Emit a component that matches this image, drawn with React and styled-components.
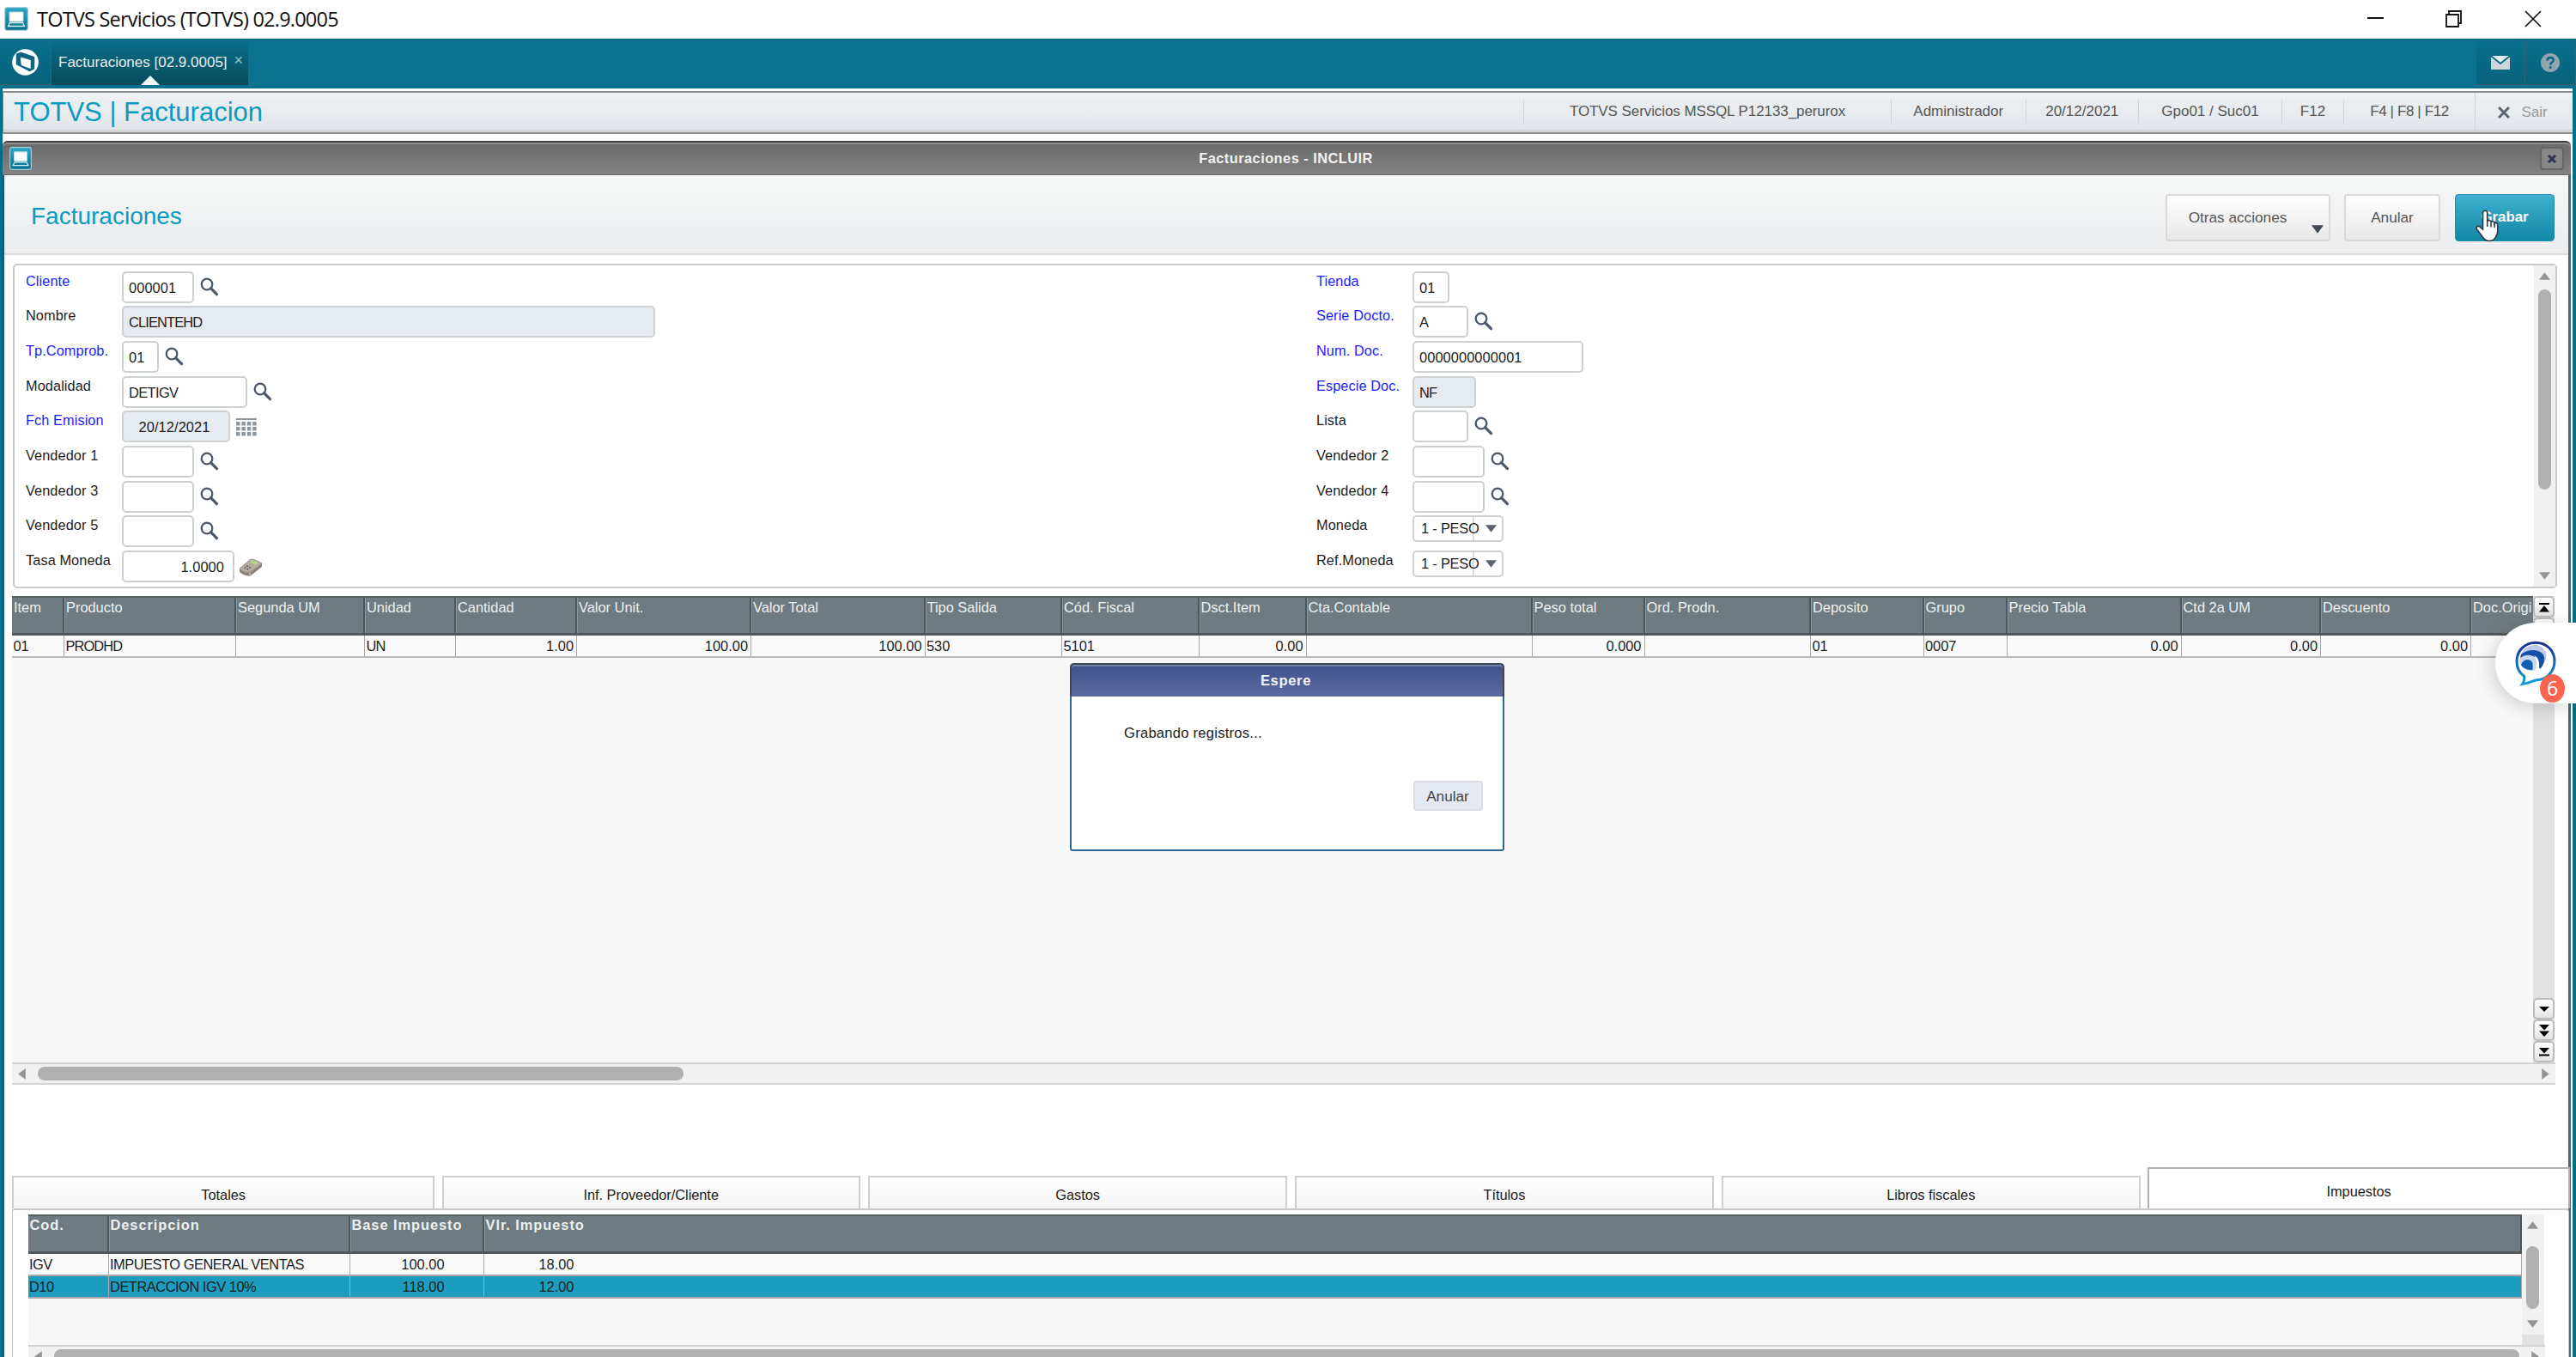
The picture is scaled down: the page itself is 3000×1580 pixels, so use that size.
import React from 'react';
import styled, { createGlobalStyle, css } from 'styled-components';

const GlobalStyle = createGlobalStyle`
  * {
    box-sizing: border-box;
  }
  body {
    margin: 0;
    background: #fff;
    color: #1c1c1c;
    font-family: 'Liberation Sans', Arial, sans-serif;
    font-size: 16.4px;
  }
  svg {
    display: block;
    flex: none;
  }
`;

const Screen = styled.div`
  position: relative;
  display: flex;
  flex-direction: column;
  width: 3000px;
  height: 1580px;
  overflow: hidden;
`;

/* ---------- title bar ---------- */

const TitleBar = styled.header`
  display: flex;
  align-items: center;
  height: 45px;
  padding: 0 40px 1px 5px;
  flex: none;
`;

const TitleText = styled.span`
  flex: 1;
  margin-left: 10px;
  font-family: 'Open Sans', sans-serif;
  font-size: 23.5px;
  letter-spacing: -0.78px;
  color: #111;
`;

const WindowControls = styled.div`
  display: flex;
  gap: 72px;
`;

/* ---------- teal bar ---------- */

const AppBar = styled.nav`
  display: flex;
  height: 58px;
  flex: none;
  padding-bottom: 3px;
  background: #0a728f;
  border-top: 2px solid #006a86;
  border-bottom: 1px solid #006a86;
`;

const BarTile = styled.div`
  display: flex;
  align-items: center;
  justify-content: center;
  width: ${p => p.$w}px;
  background: linear-gradient(#0a708c, #06627b);
  border-right: 1px solid #2f6474;
  border-bottom: 1px solid #38606c;
`;

const AppTab = styled.div`
  display: flex;
  position: relative;
  width: 229px;
  padding: 16px 0 0 8px;
  font-size: 17px;
  color: #e9eef0;
  background: linear-gradient(#0a6f8a, #064b5b);
  i {
    margin-left: 8px;
    margin-top: -3px;
    font-style: normal;
    font-size: 18px;
    color: #a9c2ca;
  }
  &::after {
    content: '';
    position: absolute;
    left: 104px;
    bottom: 0;
    border: 11px solid transparent;
    border-top: 0;
    border-bottom-color: #f2f4f5;
  }
`;

const BarSpacer = styled.div`
  flex: 1;
`;

const Workspace = styled.div`
  display: flex;
  flex-direction: column;
  flex: 1;
  padding-top: 3px;
  border-left: 3px solid #006f8a;
  border-right: 4px solid #006f8a;
`;

/* ---------- session bar ---------- */

const SessionBar = styled.div`
  display: flex;
  align-items: stretch;
  height: 50px;
  flex: none;
  padding-left: 12px;
  color: #565656;
  background: linear-gradient(#eff2f4, #e0e4e9);
  border: 2px solid #8f8f8f;
  border-width: 2px 0 2px 1px;
  box-shadow: inset 0 -3px 0 #d3d6da;
`;

const ModuleName = styled.div`
  flex: 1;
  font-size: 31px;
  line-height: 45px;
  color: #0a9bc0;
`;

const SessionItem = styled.div`
  display: flex;
  align-items: center;
  justify-content: center;
  width: ${p => p.$w}px;
  height: ${p => (p.$tall ? 46 : 29)}px;
  margin-top: ${p => (p.$tall ? 0 : 8)}px;
  padding: 0 ${p => (p.$tall ? 3 : 0)}px 1px 0;
  letter-spacing: ${p => p.$ls || 0}px;
  font-size: 17px;
  border-left: 1.5px solid #d2d6db;
  color: ${p => (p.$tall ? '#999' : 'inherit')};
  gap: 13px;
`;

/* ---------- inner window ---------- */

const InnerWindow = styled.section`
  display: flex;
  flex-direction: column;
  flex: 1;
  margin: 8px 2px 0 0;
  border-left: 2px solid #1d5672;
  border-right: 3px solid #3d6a90;
  border-radius: 7px 7px 0 0;
`;

const WindowTitle = styled.div`
  display: flex;
  align-items: center;
  height: 40px;
  flex: none;
  margin: 0 -3px 0 -2px;
  padding: 0 8px;
  font-weight: bold;
  color: #f2f2f2;
  background: linear-gradient(#6a6a6a, #838383);
  border-top: 2px solid #404040;
  border-bottom: 1px solid #6a6a6a;
  box-shadow: inset 0 2px 0 #909090;
  border-radius: 6px 6px 0 0;
  span {
    flex: 1;
    text-align: center;
    letter-spacing: 0.45px;
  }
`;

const CloseButton = styled.div`
  display: flex;
  align-items: center;
  justify-content: center;
  width: 28px;
  height: 27px;
  background: #878787;
  border: 2px solid #646464;
  border-radius: 4px;
`;

const Toolbar = styled.div`
  display: flex;
  align-items: center;
  height: 93px;
  flex: none;
  padding: 7px 16px 0 31px;
  gap: 16px;
  background: linear-gradient(#f6f8f8, #ebecee);
  border-bottom: 2px solid #dcdcdc;
  h1 {
    flex: 1;
    margin: 0 0 2px;
    font-size: 28px;
    font-weight: normal;
    color: #0a9bc0;
  }
`;

const Button = styled.button`
  position: relative;
  width: ${p => p.$w}px;
  height: 55px;
  padding: 0 ${p => (p.$menu ? 24 : 0)}px 0 0;
  font: 17.2px 'Liberation Sans', Arial, sans-serif;
  color: #555;
  background: linear-gradient(#fff, #e8e8e8);
  border: 2px solid #d9d9d9;
  border-radius: 4px;
  svg {
    position: absolute;
    right: 6px;
    bottom: 5px;
  }
  ${p =>
    p.$primary &&
    css`
      margin-left: 1px;
      font-weight: bold;
      font-size: 16.8px;
      color: #fff;
      background: linear-gradient(#3fb0ce, #1287a6);
      border: 1px solid #1a8fae;
      svg {
        right: 63px;
        bottom: -2px;
      }
    `}
`;

/* ---------- form ---------- */

const FormPanel = styled.div`
  display: flex;
  height: 378px;
  flex: none;
  margin: 10px 13px 9px 10px;
  border: 2px solid #c9c9c9;
  border-radius: 5px;
`;

const FormColumn = styled.div`
  width: ${p => p.$w}px;
  padding: 6.7px 0 0 13px;
`;

const Field = styled.div`
  display: flex;
  align-items: flex-start;
  height: 40.67px;
`;

const Label = styled.label`
  width: 112px;
  line-height: 22px;
  font-size: 16.3px;
  letter-spacing: 0.1px;
  white-space: nowrap;
  color: ${p => (p.$required ? '#1c1cff' : '#1c1c1c')};
`;

const Input = styled.div`
  width: ${p => p.$w}px;
  height: 37px;
  padding: 0 10px 0 6px;
  line-height: 34px;
  letter-spacing: ${p => p.$ls || 0.08}px;
  text-align: ${p => p.$align || 'left'};
  background: ${p => (p.$disabled ? '#e6eaf1' : '#fff')};
  border: 2px solid #cdd1d1;
  border-radius: 5px;
`;

const Select = styled.div`
  display: flex;
  position: relative;
  align-items: center;
  width: 106px;
  height: 31px;
  padding: 0 6px 0 8px;
  letter-spacing: -0.2px;
  border: 2px solid #cdd1d1;
  border-radius: 5px;
  background: linear-gradient(#cdd1d1, #cdd1d1) 67.5px 0 / 1.5px 100% no-repeat;
  svg {
    margin-left: auto;
  }
`;

const IconSlot = styled.div`
  margin: ${p => p.$top || 7}px 0 0 ${p => p.$left || 7}px;
`;

/* ---------- scrollbars ---------- */

const VScroll = styled.div`
  display: flex;
  flex-direction: column;
  align-items: center;
  width: 25px;
  margin-left: auto;
  padding: 6px 0;
  background: #f1f1f1;
  svg:last-child {
    margin-top: auto;
  }
`;

const VThumb = styled.div`
  width: 15.5px;
  height: ${p => p.$h}px;
  margin-top: ${p => p.$top}px;
  background: #b0b0b0;
  border-radius: 8px;
`;

const HScroll = styled.div`
  display: flex;
  align-items: center;
  height: 26px;
  flex: none;
  padding: 0 5px;
  background: #f1f1f1;
  border-top: 2px solid #ced3d3;
  border-bottom: 2px solid #ced3d3;
  svg:last-child {
    margin-left: auto;
  }
`;

const HThumb = styled.div`
  width: ${p => p.$w}px;
  height: 16px;
  margin-left: 12px;
  background: #b0b0b0;
  border-radius: 8px;
`;

const StepButton = styled.div`
  display: flex;
  align-items: center;
  justify-content: center;
  height: 25px;
  background: linear-gradient(#fff, #e4e4e4);
  border: 2px solid #bcbcbc;
  border-radius: 5px;
`;

/* ---------- items grid ---------- */

const GridArea = styled.div`
  display: flex;
  flex: none;
  height: 543px;
  margin-left: 9px;
`;

const GridBody = styled.div`
  width: ${p => p.$w}px;
  overflow: hidden;
  background: #f8f8f8;
`;

const HeadRow = styled.div`
  display: flex;
  height: 46px;
  color: #eef0f0;
  background: #6e7c81;
  border-top: 2px solid #555f62;
  border-bottom: 3px solid #54585b;
`;

const HeadCell = styled.div`
  flex: none;
  width: ${p => p.$w}px;
  padding: ${p => (p.$bold ? 1 : 2)}px 0 0 2px;
  font-weight: ${p => (p.$bold ? 'bold' : 'normal')};
  letter-spacing: ${p => (p.$bold ? 0.95 : 0)}px;
  white-space: nowrap;
  border-right: 2px solid #4e575b;
  box-shadow: 1px 0 0 #8e999c;
`;

const BodyRow = styled.div`
  display: flex;
  height: 26px;
  background: ${p => (p.$selected ? '#1c9dbf' : '#fafafa')};
  border-bottom: 2px solid ${p => (p.$plain ? '#b7b7b7' : '#b0a3a3')};
`;

const Cell = styled.div`
  flex: none;
  width: ${p => p.$w}px;
  padding: 0 ${p => p.$pr || 3}px 0 1.5px;
  line-height: 24px;
  white-space: nowrap;
  text-align: ${p => (p.$right ? 'right' : 'left')};
  letter-spacing: ${p => p.$ls || 0}px;
  border-right: 1.5px solid #aaa;
`;

const StepScroll = styled.div`
  display: flex;
  flex-direction: column;
  width: 25px;
  background: #e1e1e1;
`;

const GridHScroll = styled(HScroll)`
  width: 2962px;
  margin-left: 9px;
`;

const TaxHScroll = styled(HScroll)`
  width: 2931px;
`;

/* ---------- tabs ---------- */

const TabStrip = styled.div`
  display: flex;
  align-items: flex-end;
  height: 48px;
  flex: none;
  margin: 96px -2px 0 9px;
  gap: 4px;
`;

const Tab = styled.div`
  width: ${p => p.$w}px;
  height: ${p => (p.$active ? 48 : 38)}px;
  margin-left: ${p => p.$ml || 0}px;
  padding-top: ${p => (p.$active ? 16 : 10)}px;
  line-height: 20px;
  text-align: center;
  letter-spacing: -0.05px;
  background: ${p => (p.$active ? '#fff' : 'linear-gradient(#fff, #f5f5f5)')};
  border: 2px solid ${p => (p.$active ? '#b2b2b2' : '#cfcfcf')};
  border-bottom: 0;
`;

const TabPanel = styled.div`
  flex: 1;
  margin-left: 9px;
  margin-right: -1px;
  padding: 5px 27px 0 17.5px;
  border: 1.5px solid #c4c4c4;
  border-top: 2px solid #c9c9c9;
  border-radius: 4px 4px 0 0;
`;

const TaxArea = styled.div`
  display: flex;
  height: 152px;
`;

const TaxScroll = styled.div`
  width: 26px;
  height: 152px;
  background: #e1e1e1;
  > div {
    width: 26px;
    height: 140px;
  }
`;

/* ---------- wait dialog ---------- */

const Dialog = styled.div`
  position: absolute;
  left: 1245.5px;
  top: 772px;
  width: 506px;
  height: 219px;
  background: #fff;
  border: 2px solid #2b6994;
  border-top: 0;
  border-radius: 5px 5px 3px 3px;
  h2 {
    height: 39px;
    margin: 0 -2px;
    padding-right: 2px;
    font-size: 16.5px;
    line-height: 37px;
    letter-spacing: 0.7px;
    text-align: center;
    color: #f4f4f4;
    background: linear-gradient(#3d518a, #5d6ca1);
    border: 2px solid #414752;
    border-bottom: 0;
    border-radius: 5px 5px 0 0;
    box-shadow: inset 0 2px 0 #7480ab;
  }
  p {
    margin: 33px 0 0 61.5px;
    line-height: 20px;
    font-size: 16.6px;
    letter-spacing: 0.24px;
  }
`;

const DialogButton = styled.div`
  width: 81px;
  height: 35px;
  margin: 45px 0 0 398px;
  line-height: 33px;
  text-align: center;
  font-size: 17.2px;
  color: #444;
  background: #e5e9f1;
  border: 2px solid #dadcdf;
  border-radius: 4px;
`;

/* ---------- floating chat ---------- */

const ChatBubble = styled.div`
  position: absolute;
  right: 0;
  top: 725px;
  width: 94px;
  height: 94px;
  padding: 21px 0 0 23px;
  background: #fff;
  border-radius: 47px 0 0 47px;
  box-shadow: -4px 4px 22px rgba(0, 0, 0, 0.16);
`;

const ChatCount = styled.span`
  position: absolute;
  left: 52px;
  top: 60px;
  width: 29px;
  height: 33px;
  border-radius: 50%;
  background: #fb6450;
  color: #fff;
  font-family: 'Open Sans', sans-serif;
  font-size: 23px;
  line-height: 32px;
  text-align: center;
`;

/* ---------- icons ---------- */

const MonitorIcon = ({ w, h }) => (
  <svg width={w} height={h} viewBox="0 0 28 28" preserveAspectRatio="none">
    <defs>
      <linearGradient id="monitor" x1="0" y1="0" x2="0" y2="1">
        <stop offset="0" stopColor="#2aa7c6" />
        <stop offset="1" stopColor="#06718f" />
      </linearGradient>
    </defs>
    <rect x="0.7" y="0.7" width="26.6" height="26.6" rx="2.5" fill="url(#monitor)" stroke="#a9cdd8" strokeWidth="1.2" />
    <path d="M6 6h16v11H6z" fill="#fff" stroke="#b9dbe4" />
    <path d="M4.5 22.5l2-4h15l2 4z" fill="#117a97" stroke="#dff0f4" strokeWidth="1.3" />
  </svg>
);

const LogoIcon = () => (
  <svg width="31" height="31" viewBox="0 0 31 31" strokeLinejoin="round">
    <circle cx="15.5" cy="15.5" r="15.3" fill="#fff" />
    <path d="M6 6.500l4.500-1.500L25 10v12.500L20.500 25 6 17.500z" fill="#0a6680" stroke="#0a6680" strokeWidth="2.500" />
    <path d="M10.500 10.500l10.500 3v8.500l-9.500-3.500z" fill="#fff" stroke="#fff" strokeWidth="1.500" />
  </svg>
);

const SearchIcon = () => (
  <svg width="22" height="22" viewBox="0 0 22 22" fill="none" stroke="#4b5869">
    <circle cx="8" cy="8" r="6.300" strokeWidth="2.300" />
    <path d="M12.500 12.700l7 7" strokeWidth="3.200" strokeLinecap="round" />
  </svg>
);

const CalendarIcon = () => (
  <svg width="24" height="22" viewBox="0 0 24 22" fill="#8d96a3">
    <rect width="24" height="2" />
    {[4, 10, 16].map(y => [0, 6.4, 12.8, 19.2].map(x => <rect key={`${x}${y}`} x={x} y={y} width="4.500" height="4.500" />))}
  </svg>
);

const CalculatorIcon = () => (
  <svg width="28" height="22" viewBox="0 0 28 22">
    <path d="M1 12L14 1q4 0 13 5v4L13 21Q5 20 1 16z" fill="#8c8378" />
    <path d="M1 12L14 1q5 0 13 5L13 17Q5 17 1 12z" fill="#b5aca1" stroke="#8e867b" strokeWidth="0.700" />
    <path d="M12.500 4.500l3-2.300q4 .5 7.500 2.700l-3.500 3q-3-2.400-7-3.400z" fill="#b7dc83" />
    <path d="M9 8.500l6 3.500M6.500 10.500l6 3.500" stroke="#6d655d" strokeWidth="1.600" strokeDasharray="2 1.400" />
    <path d="M13 17v4" stroke="#e6e1da" />
  </svg>
);

const rotations = { down: 0, left: 90, up: 180, right: 270 };

const Arrow = ({ dir = 'down', color = '#949494', size = 13 }) => (
  <svg width={size} height={size} viewBox="0 0 12 12">
    <path d="M0 2h12L6 10z" fill={color} transform={`rotate(${rotations[dir]} 6 6)`} />
  </svg>
);

const StepIcon = ({ kind }) => (
  <svg width="12" height="16" viewBox="0 0 12 16">
    {kind === 'first' && <path d="M0 3h12v2H0zM0 13.500h12L6 6z" />}
    {kind === 'up' && <path d="M1 12h10L6 4z" />}
    {kind === 'down' && <path d="M0 5h12L6 11z" />}
    {kind === 'pageDown' && <path d="M0 1h12L6 7.500zM0 8.500h12L6 15z" />}
    {kind === 'last' && <path d="M0 3h12L6 9.500zM0 10.500h12v2H0z" />}
  </svg>
);

const PointerIcon = () => (
  <svg width="28" height="38" viewBox="0 0 28 38">
    <path
      d="M8.500 23V4q0-2.800 2.600-2.800T13.700 4v10q.4-1.800 2.300-1.500t2 2.300q.6-1.400 2.400-1t1.800 2.200q.6-1 2-.5t1.600 2.500v7q0 4-2.300 7-2.300 4.500-7.500 4.500-4.500 0-7.500-4.200L1.500 23q-1.200-3 1-3.500T6 21z"
      fill="#fff"
      stroke="#2c3440"
      strokeWidth="1.600"
    />
    <path d="M13.700 13v7M18 14.500v6M22.200 16v5" stroke="#2c3440" strokeWidth="1.500" />
  </svg>
);

const ChatIcon = () => (
  <svg width="48" height="53" viewBox="0 0 48 53">
    <defs>
      <linearGradient id="chat" x1="0" y1="0" x2="0" y2="1">
        <stop offset="0" stopColor="#1b2f93" />
        <stop offset="1" stopColor="#12a0dc" />
      </linearGradient>
    </defs>
    <path
      d="M24 2.200c12.400 0 22 9 22 21.500S36.500 45.500 25 45.800C20 47 14.500 50 8.500 50.500c2-2.400 2.600-5.500 2.200-9C5 37.500 2 31 2 24 2 11.500 11.500 2.200 24 2.200z"
      fill="#fff"
      stroke="url(#chat)"
      strokeWidth="3"
    />
    <path d="M9 12C14 4 31 1 36 14c1.500 6-1 11-4 14 1-7-3-14-9-15-6-1-12 1-17 6z" fill="#bccbe8" />
    <path d="M7 16c7-6 19-7 25-1 4 5 2 12-2 17-1 1-2 0-2-1 1-7-2-11-7-12-5-2-11-1-15 2z" fill="#1250aa" />
    <path d="M5 22c4-7 16-7 21 0 3 6 0 10-4 13C12 36 5 30 5 22z" fill="#c9d8ee" />
    <path d="M22 17c7 3 8 12 1 18 3-6 3-12-1-18z" fill="#fff" />
    <path d="M7 28c2-7 10-8 13-3 1 3 1 7 0 9-6 0-11-2-13-6z" fill="#0f5fb2" />
  </svg>
);

/* ---------- data ---------- */

const session = [
  { w: 428, text: 'TOTVS Servicios MSSQL P12133_perurox', ls: -0.08 },
  { w: 156.5, text: 'Administrador' },
  { w: 131.5, text: '20/12/2021' },
  { w: 167, text: 'Gpo01 / Suc01' },
  { w: 72, text: 'F12' },
  { w: 153, text: 'F4 | F8 | F12', ls: -0.4 }
];

const leftFields = [
  { label: 'Cliente', required: true, value: '000001', w: 84, icon: 'search' },
  { label: 'Nombre', value: 'CLIENTEHD', w: 621, disabled: true, ls: -0.85 },
  { label: 'Tp.Comprob.', required: true, value: '01', w: 43, icon: 'search' },
  { label: 'Modalidad', value: 'DETIGV', w: 146, icon: 'search', ls: -0.6 },
  { label: 'Fch Emision', required: true, value: '20/12/2021', w: 126, disabled: true, align: 'center', icon: 'calendar' },
  { label: 'Vendedor 1', w: 84, icon: 'search' },
  { label: 'Vendedor 3', w: 84, icon: 'search' },
  { label: 'Vendedor 5', w: 84, icon: 'search' },
  { label: 'Tasa Moneda', value: '1.0000', w: 131, align: 'right', icon: 'calculator' }
];

const rightFields = [
  { label: 'Tienda', required: true, value: '01', w: 43 },
  { label: 'Serie Docto.', required: true, value: 'A', w: 65, icon: 'search' },
  { label: 'Num. Doc.', required: true, value: '0000000000001', w: 199 },
  { label: 'Especie Doc.', required: true, value: 'NF', w: 74, disabled: true, ls: -0.8 },
  { label: 'Lista', w: 65, icon: 'search' },
  { label: 'Vendedor 2', w: 84, icon: 'search' },
  { label: 'Vendedor 4', w: 84, icon: 'search' },
  { label: 'Moneda', select: '1 - PESO' },
  { label: 'Ref.Moneda', select: '1 - PESO' }
];

const columns = [
  { title: 'Item', w: 61, value: '01' },
  { title: 'Producto', w: 200, value: 'PRODHD', ls: -0.9 },
  { title: 'Segunda UM', w: 150 },
  { title: 'Unidad', w: 106, value: 'UN', ls: -0.8 },
  { title: 'Cantidad', w: 141, value: '1.00', right: true },
  { title: 'Valor Unit.', w: 203, value: '100.00', right: true },
  { title: 'Valor Total', w: 202.5, value: '100.00', right: true },
  { title: 'Tipo Salida', w: 159.5, value: '530' },
  { title: 'Cód. Fiscal', w: 159.5, value: '5101' },
  { title: 'Dsct.Item', w: 125, value: '0.00', right: true },
  { title: 'Cta.Contable', w: 263 },
  { title: 'Peso total', w: 131, value: '0.000', right: true },
  { title: 'Ord. Prodn.', w: 193.5 },
  { title: 'Deposito', w: 131.5, value: '01' },
  { title: 'Grupo', w: 97, value: '0007' },
  { title: 'Precio Tabla', w: 203, value: '0.00', right: true },
  { title: 'Ctd 2a UM', w: 162.5, value: '0.00', right: true },
  { title: 'Descuento', w: 175, value: '0.00', right: true },
  { title: 'Doc.Origi', w: 120 }
];

const tabs = [
  { title: 'Totales', w: 492.5 },
  { title: 'Inf. Proveedor/Cliente', w: 487, ml: 4.5 },
  { title: 'Gastos', w: 488, ml: 5.5 },
  { title: 'Títulos', w: 488, ml: 5 },
  { title: 'Libros fiscales', w: 488, ml: 5 },
  { title: 'Impuestos', w: 492, ml: 4.5, active: true }
];

const taxColumns = [
  { title: 'Cod.', w: 94 },
  { title: 'Descripcion', w: 281 },
  { title: 'Base Impuesto', w: 156 },
  { title: 'Vlr. Impuesto', w: 2373 }
];

const taxes = [
  { code: 'IGV', name: 'IMPUESTO GENERAL VENTAS', base: '100.00', value: '18.00' },
  { code: 'D10', name: 'DETRACCION IGV 10%', base: '118.00', value: '12.00', selected: true }
];

/* ---------- pieces ---------- */

const fieldIcons = {
  search: (
    <IconSlot>
      <SearchIcon />
    </IconSlot>
  ),
  calendar: (
    <IconSlot $left={6.5} $top={9}>
      <CalendarIcon />
    </IconSlot>
  ),
  calculator: (
    <IconSlot $left={4.5} $top={9}>
      <CalculatorIcon />
    </IconSlot>
  )
};

const FieldRow = ({ field }) => (
  <Field>
    <Label $required={field.required}>{field.label}</Label>
    {field.select ? (
      <Select>
        {field.select}
        <Arrow color="#5b6370" />
      </Select>
    ) : (
      <Input $w={field.w} $disabled={field.disabled} $align={field.align} $ls={field.ls}>
        {field.value}
      </Input>
    )}
    {fieldIcons[field.icon]}
  </Field>
);

const ItemsGrid = () => (
  <>
    <GridArea>
      <GridBody $w={2936}>
        <HeadRow>
          {columns.map(col => (
            <HeadCell key={col.title} $w={col.w}>
              {col.title}
            </HeadCell>
          ))}
        </HeadRow>
        <BodyRow $plain>
          {columns.map(col => (
            <Cell key={col.title} $w={col.w} $right={col.right} $ls={col.ls}>
              {col.value}
            </Cell>
          ))}
        </BodyRow>
      </GridBody>
      <StepScroll>
        <StepButton>
          <StepIcon kind="first" />
        </StepButton>
        <StepButton>
          <StepIcon kind="up" />
        </StepButton>
        <BarSpacer />
        <StepButton>
          <StepIcon kind="down" />
        </StepButton>
        <StepButton>
          <StepIcon kind="pageDown" />
        </StepButton>
        <StepButton>
          <StepIcon kind="last" />
        </StepButton>
      </StepScroll>
    </GridArea>
    <GridHScroll>
      <Arrow dir="left" />
      <HThumb $w={752} />
      <Arrow dir="right" />
    </GridHScroll>
  </>
);

const TaxPanel = () => (
  <TabPanel>
    <TaxArea>
      <GridBody $w={2904}>
        <HeadRow>
          {taxColumns.map(col => (
            <HeadCell key={col.title} $w={col.w} $bold>
              {col.title}
            </HeadCell>
          ))}
        </HeadRow>
        {taxes.map(tax => (
          <BodyRow key={tax.code} $selected={tax.selected}>
            <Cell $w={94} $ls={-0.5}>{tax.code}</Cell>
            <Cell $w={281} $ls={-0.46}>{tax.name}</Cell>
            <Cell $w={156} $right $pr={45}>{tax.base}</Cell>
            <Cell $w={2373} $right $pr={2267}>{tax.value}</Cell>
          </BodyRow>
        ))}
      </GridBody>
      <TaxScroll>
        <VScroll>
          <Arrow dir="up" />
          <VThumb $h={73} $top={18} />
          <Arrow />
        </VScroll>
      </TaxScroll>
    </TaxArea>
    <TaxHScroll>
      <Arrow dir="left" />
      <HThumb $w={2871} />
      <Arrow dir="right" />
    </TaxHScroll>
  </TabPanel>
);

const App = () => (
  <Screen>
    <GlobalStyle />
    <TitleBar>
      <MonitorIcon w={28} h={28} />
      <TitleText>TOTVS Servicios (TOTVS) 02.9.0005</TitleText>
      <WindowControls>
        <svg width="19" height="20" stroke="#111" strokeWidth="2">
          <path d="M0 9h19" />
        </svg>
        <svg width="20" height="20" fill="none" stroke="#111" strokeWidth="1.800">
          <path d="M1 5h14v14H1zM4 5V1h14v14h-3" />
        </svg>
        <svg width="20" height="20" stroke="#111" strokeWidth="1.700">
          <path d="M1 1l18 18M19 1L1 19" />
        </svg>
      </WindowControls>
    </TitleBar>
    <AppBar>
      <BarTile $w={60}>
        <LogoIcon />
      </BarTile>
      <AppTab>
        Facturaciones [02.9.0005]<i>×</i>
      </AppTab>
      <BarSpacer />
      <BarTile $w={57.5}>
        <svg width="22" height="16" viewBox="0 0 22 16">
          <path d="M0 0h22v16H0z" fill="#c9d6dc" />
          <path d="M0 0l11 9L22 0" fill="#e4ebee" stroke="#0a6b85" strokeWidth="1.800" />
        </svg>
      </BarTile>
      <BarTile $w={59}>
        <svg width="22" height="22" viewBox="0 0 22 22">
          <circle cx="11" cy="11" r="11" fill="#8fa5b0" />
          <path d="M7.500 8.500q0-3.500 3.600-3.500t3.600 3q0 1.700-1.900 2.800-1.600 1-1.600 2.700" fill="none" stroke="#07657e" strokeWidth="2.400" />
          <circle cx="11.200" cy="16.500" r="1.500" fill="#07657e" />
        </svg>
      </BarTile>
    </AppBar>
    <Workspace>
      <SessionBar>
        <ModuleName>TOTVS | Facturacion</ModuleName>
        {session.map(item => (
          <SessionItem key={item.text} $w={item.w} $ls={item.ls}>
            {item.text}
          </SessionItem>
        ))}
        <SessionItem $w={114} $tall>
          <svg width="14" height="14" stroke="#5b6270" strokeWidth="3">
            <path d="M1 1l12 12M13 1L1 13" />
          </svg>
          Sair
        </SessionItem>
      </SessionBar>
      <InnerWindow>
        <WindowTitle>
          <MonitorIcon w={26} h={27} />
          <span>Facturaciones - INCLUIR</span>
          <CloseButton>
            <svg width="10" height="10" stroke="#2c3350" strokeWidth="3">
              <path d="M1 1l8 8M9 1L1 9" />
            </svg>
          </CloseButton>
        </WindowTitle>
        <Toolbar>
          <h1>Facturaciones</h1>
          <Button $w={192} $menu>
            Otras acciones
            <Arrow color="#444a55" size={14} />
          </Button>
          <Button $w={112}>Anular</Button>
          <Button $w={116} $primary>
            Grabar
            <PointerIcon />
          </Button>
        </Toolbar>
        <FormPanel>
          <FormColumn $w={1503}>
            {leftFields.map(field => (
              <FieldRow key={field.label} field={field} />
            ))}
          </FormColumn>
          <FormColumn $w={1000}>
            {rightFields.map(field => (
              <FieldRow key={field.label} field={field} />
            ))}
          </FormColumn>
          <VScroll>
            <Arrow dir="up" />
            <VThumb $h={233} $top={9} />
            <Arrow />
          </VScroll>
        </FormPanel>
        <ItemsGrid />
        <TabStrip>
          {tabs.map(tab => (
            <Tab key={tab.title} $w={tab.w} $ml={tab.ml} $active={tab.active}>
              {tab.title}
            </Tab>
          ))}
        </TabStrip>
        <TaxPanel />
      </InnerWindow>
    </Workspace>
    <Dialog>
      <h2>Espere</h2>
      <p>Grabando registros...</p>
      <DialogButton>Anular</DialogButton>
    </Dialog>
    <ChatBubble>
      <ChatIcon />
      <ChatCount>6</ChatCount>
    </ChatBubble>
  </Screen>
);

export default App;
